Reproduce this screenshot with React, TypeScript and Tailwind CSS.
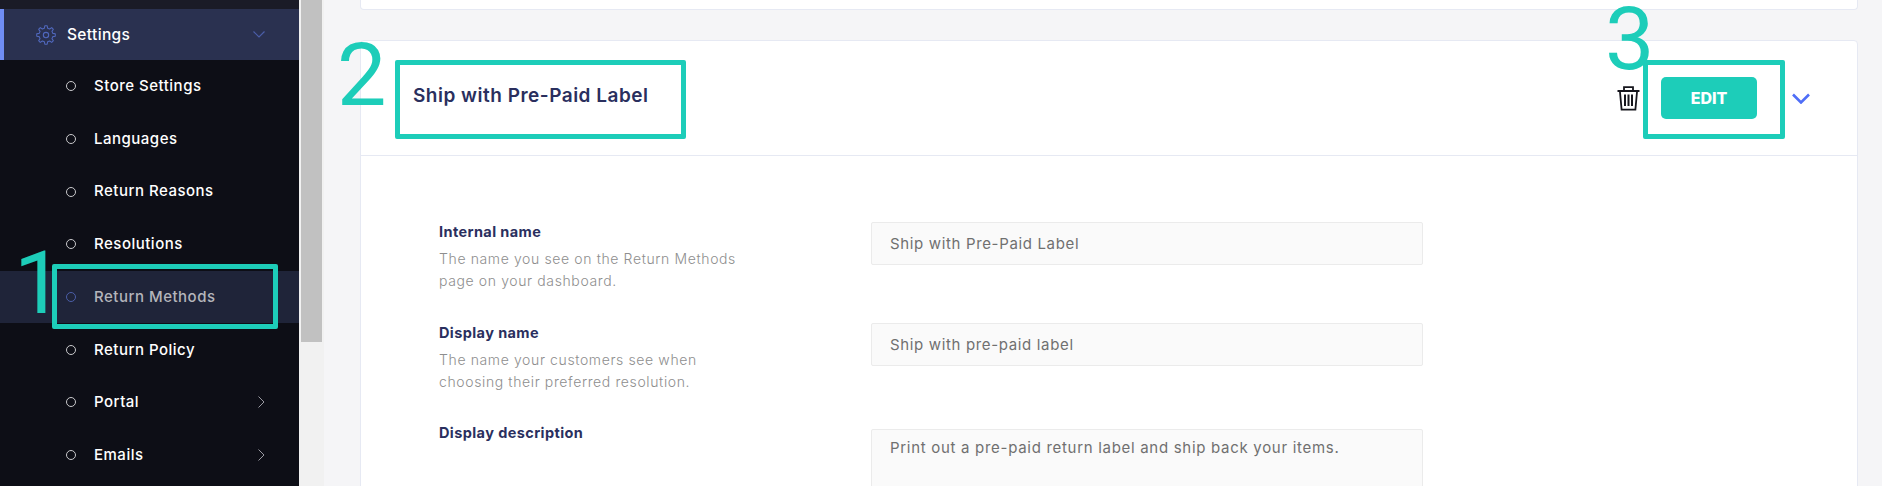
import React from "react";

const F = { fontFamily: '"Inter", "Noto Sans", sans-serif' };
const D = { fontFamily: '"Roboto", sans-serif' };

function gearPath() {
  const pts: string[] = [];
  const n = 8;
  const ro = 11.2;
  const ri = 8.4;
  for (let i = 0; i < n; i++) {
    const a = (i * 2 * Math.PI) / n - Math.PI / 2;
    const s = (2 * Math.PI) / n;
    const list: [number, number][] = [
      [ri, a - s * 0.3],
      [ro, a - s * 0.16],
      [ro, a + s * 0.16],
      [ri, a + s * 0.3],
    ];
    for (const [r, t] of list) {
      pts.push(`${(12 + r * Math.cos(t)).toFixed(2)} ${(12 + r * Math.sin(t)).toFixed(2)}`);
    }
  }
  return "M" + pts.join("L") + "Z";
}

function Gear() {
  return (
    <svg width="20" height="20" viewBox="0 0 24 24" fill="none" stroke="#5068bd" strokeWidth="1.3" strokeLinejoin="round" className="shrink-0">
      <path d={gearPath()} />
      <circle cx="12" cy="12" r="3.2" />
    </svg>
  );
}

function Chevron({ dir, color }: { dir: "down" | "right"; color: string }) {
  return dir === "down" ? (
    <svg width="12" height="7" viewBox="0 0 12 7" fill="none" stroke={color} strokeWidth="1.2">
      <path d="M.5.5 6 6l5.5-5.5" />
    </svg>
  ) : (
    <svg width="7" height="12" viewBox="0 0 7 12" fill="none" stroke={color} strokeWidth="1">
      <path d="M.5.5 6 6 .5 11.5" />
    </svg>
  );
}

function Trash() {
  return (
    <svg width="23" height="25" viewBox="0 0 23 25" fill="none" stroke="#16161d" strokeWidth="1.8">
      <path d="M.5 5h22" strokeWidth="2" />
      <path d="M7 4.5V1.2h9v3.3" />
      <path d="M3 6l1.6 17.6h13.8L20 6" />
      <path d="M8 8.5v11.5M11.5 8.5v11.5M15 8.5v11.5" strokeWidth="2" />
    </svg>
  );
}

function NavItem({ label, active, arrow }: { label: string; active?: boolean; arrow?: boolean }) {
  return (
    <div className={`flex h-[52.7px] items-center pl-[66px] pr-[34px] ${active ? "bg-[#1f2439]" : ""}`}>
      <span className={`h-[10px] w-[10px] shrink-0 rounded-full border ${active ? "border-[#4b5ea8]" : "border-[#c9c9cc]"}`} />
      <span className={`ml-[18px] flex-1 text-[15px] font-medium tracking-[0.5px] ${active ? "text-[#b4b5bb]" : "text-white"}`}>{label}</span>
      {arrow && <Chevron dir="right" color="#9a9aa2" />}
    </div>
  );
}

function Row({ label, desc, children, className }: { label: string; desc?: string[]; children: React.ReactNode; className: string }) {
  return (
    <div className={`flex ${className}`}>
      <div className="w-[432px] shrink-0">
        <div className="text-[14.5px] leading-[22px] font-bold tracking-[0.4px] text-[#2a2f5e]">{label}</div>
        {desc && (
          <div className="mt-[5px] text-[14px] leading-[22px] font-light tracking-[0.62px] text-[#8e8e8e]">
            {desc.map((d) => (
              <div key={d}>{d}</div>
            ))}
          </div>
        )}
      </div>
      {children}
    </div>
  );
}

function Field({ text }: { text: string }) {
  return (
    <div className="mt-[1px] flex h-[43px] w-[552px] items-center rounded-[2px] border border-[#ebebeb] bg-[#fafafa] pl-[18px] pt-[1px] text-[15px] tracking-[0.65px] text-[#707070]">
      {text}
    </div>
  );
}

export default function App() {
  return (
    <div className="relative flex h-[486px] w-[1882px] overflow-hidden bg-[#f5f5f7]" style={F}>
      <aside className="w-[299px] shrink-0 bg-[#0d0e16]">
        <div className="h-[9px] bg-[#1a1b27]" />
        <div className="flex h-[51px] items-center border-l-4 border-[#6f8df5] bg-[#2a3150] pl-[32px] pr-[34px]">
          <Gear />
          <span className="ml-[11px] flex-1 text-[15.5px] font-medium tracking-[0.35px] text-white">Settings</span>
          <Chevron dir="down" color="#4b5ea8" />
        </div>
        <NavItem label="Store Settings" />
        <NavItem label="Languages" />
        <NavItem label="Return Reasons" />
        <NavItem label="Resolutions" />
        <NavItem label="Return Methods" active />
        <NavItem label="Return Policy" />
        <NavItem label="Portal" arrow />
        <NavItem label="Emails" arrow />
      </aside>

      <div className="w-[25px] shrink-0 bg-[#f1f1f1] pl-[2px]">
        <div className="h-[342px] w-[21px] bg-[#c1c1c1]" />
      </div>

      <main className="flex-1 pl-[36px] pr-[24px]">
        <div className="h-[10px] rounded-b border border-t-0 border-[#e6e9f3] bg-white" />
        <section className="mt-[30px] h-[500px] rounded border border-[#e6e9f3] bg-white">
          <header className="flex h-[115px] items-center border-b border-[#e6e9f3] pl-[52px]">
            <h2 className="mb-[4px] flex-1 text-[19px] font-semibold tracking-[0.5px] text-[#2a2f5e]">Ship with Pre-Paid Label</h2>
            <Trash />
            <button className="ml-[21px] h-[42px] w-[96px] rounded-[5px] bg-[#1dcdb9] text-[16px] font-extrabold text-white">EDIT</button>
            <svg width="18" height="11" viewBox="0 0 18 11" fill="none" stroke="#4f6ef7" strokeWidth="2.6" className="ml-[35px] mr-[47px]">
              <path d="M1 1.5 9 9.5l8-8" />
            </svg>
          </header>
          <div className="pl-[78px] pt-[65px]">
            <Row label="Internal name" desc={["The name you see on the Return Methods", "page on your dashboard."]} className="h-[101px]">
              <Field text="Ship with Pre-Paid Label" />
            </Row>
            <Row label="Display name" desc={["The name your customers see when", "choosing their preferred resolution."]} className="h-[100px]">
              <Field text="Ship with pre-paid label" />
            </Row>
            <Row label="Display description" className="h-[60px]">
              <div className="mt-[7px] h-[100px] w-[552px] rounded-[2px] border border-[#ebebeb] bg-[#fafafa] pl-[18px] pt-[7px] text-[15px] tracking-[0.7px] text-[#707070]">
                Print out a pre-paid return label and ship back your items.
              </div>
            </Row>
          </div>
        </section>
      </main>

      {/* annotations over the screenshot */}
      <div className="absolute left-[52px] top-[264px] h-[65px] w-[226px] rounded-[2px] border-[5px] border-[#1dcdb9]" />
      <div className="absolute left-[395px] top-[60px] h-[79px] w-[291px] rounded-[2px] border-[5px] border-[#1dcdb9]" />
      <div className="absolute left-[1643px] top-[60px] h-[79px] w-[142px] rounded-[2px] border-[5px] border-[#1dcdb9]" />
      <span className="absolute left-[14px] top-[245px] text-[88px] leading-[76px] text-[#1dcdb9]" style={D}>1</span>
      <span className="absolute left-[337px] top-[37px] text-[88px] leading-[76px] text-[#1dcdb9]" style={D}>2</span>
      <span className="absolute left-[1605px] top-[1px] text-[88px] leading-[76px] text-[#1dcdb9]" style={D}>3</span>
    </div>
  );
}
